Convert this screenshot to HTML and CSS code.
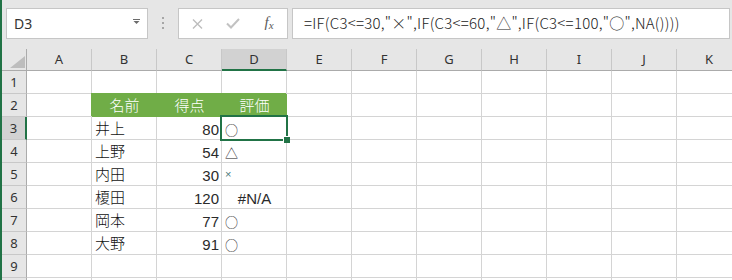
FILE: index.html
```html
<!DOCTYPE html>
<html lang="ja">
<head>
    <meta charset="UTF-8">
    <title>評価</title>
    <link rel="stylesheet" href="styles.css">
</head>
<body>
    <div class="window">
        <div class="toolbar">
            <div class="name-box">
                <span>D3</span>
                <svg class="drop" width="7" height="5" viewBox="0 0 7 5">
                    <path d="M0 0.5H7" stroke="#6b6b6b" stroke-width="1"/>
                    <path d="M0.5 2H6.5L3.5 5Z" fill="#6b6b6b"/>
                </svg>
            </div>
            <div class="grip"><i></i><i></i><i></i></div>
            <div class="fx-buttons">
                <span class="btn">
                    <svg width="11" height="10" viewBox="0 0 11 10">
                        <path d="M1 0.5L10 9.5M10 0.5L1 9.5" stroke="#bdbdbd" stroke-width="1.4" fill="none"/>
                    </svg>
                </span>
                <span class="btn">
                    <svg width="14" height="11" viewBox="0 0 14 11">
                        <path d="M1 5.5L5 9.5L13 1" stroke="#c2c2c2" stroke-width="2" fill="none"/>
                    </svg>
                </span>
                <span class="btn fx">f<small>x</small></span>
            </div>
            <div class="formula">=IF(C3&lt;=30,"×",IF(C3&lt;=60,"△",IF(C3&lt;=100,"○",NA())))</div>
        </div>

        <div class="sheet">
            <div class="corner"><i></i></div>
            <div class="col">A</div>
            <div class="col">B</div>
            <div class="col">C</div>
            <div class="col active">D</div>
            <div class="col">E</div>
            <div class="col">F</div>
            <div class="col">G</div>
            <div class="col">H</div>
            <div class="col">I</div>
            <div class="col">J</div>
            <div class="col">K</div>

            <div class="row">1</div>
            <div class="cell"></div><div class="cell"></div><div class="cell"></div><div class="cell"></div>
            <div class="cell"></div><div class="cell"></div><div class="cell"></div><div class="cell"></div>
            <div class="cell"></div><div class="cell"></div><div class="cell"></div>

            <div class="row">2</div>
            <div class="cell"></div>
            <div class="cell head">名前</div>
            <div class="cell head">得点</div>
            <div class="cell head">評価</div>
            <div class="cell"></div><div class="cell"></div><div class="cell"></div><div class="cell"></div>
            <div class="cell"></div><div class="cell"></div><div class="cell"></div>

            <div class="row active">3</div>
            <div class="cell"></div>
            <div class="cell">井上</div>
            <div class="cell num">80</div>
            <div class="cell mark selected">○<span class="sel-box"></span><span class="handle"></span></div>
            <div class="cell"></div><div class="cell"></div><div class="cell"></div><div class="cell"></div>
            <div class="cell"></div><div class="cell"></div><div class="cell"></div>

            <div class="row">4</div>
            <div class="cell"></div>
            <div class="cell">上野</div>
            <div class="cell num">54</div>
            <div class="cell mark">△</div>
            <div class="cell"></div><div class="cell"></div><div class="cell"></div><div class="cell"></div>
            <div class="cell"></div><div class="cell"></div><div class="cell"></div>

            <div class="row">5</div>
            <div class="cell"></div>
            <div class="cell">内田</div>
            <div class="cell num">30</div>
            <div class="cell"><span class="cross">×</span></div>
            <div class="cell"></div><div class="cell"></div><div class="cell"></div><div class="cell"></div>
            <div class="cell"></div><div class="cell"></div><div class="cell"></div>

            <div class="row">6</div>
            <div class="cell"></div>
            <div class="cell">榎田</div>
            <div class="cell num">120</div>
            <div class="cell num error">#N/A</div>
            <div class="cell"></div><div class="cell"></div><div class="cell"></div><div class="cell"></div>
            <div class="cell"></div><div class="cell"></div><div class="cell"></div>

            <div class="row">7</div>
            <div class="cell"></div>
            <div class="cell">岡本</div>
            <div class="cell num">77</div>
            <div class="cell mark">○</div>
            <div class="cell"></div><div class="cell"></div><div class="cell"></div><div class="cell"></div>
            <div class="cell"></div><div class="cell"></div><div class="cell"></div>

            <div class="row">8</div>
            <div class="cell"></div>
            <div class="cell">大野</div>
            <div class="cell num">91</div>
            <div class="cell mark">○</div>
            <div class="cell"></div><div class="cell"></div><div class="cell"></div><div class="cell"></div>
            <div class="cell"></div><div class="cell"></div><div class="cell"></div>

            <div class="row">9</div>
            <div class="cell"></div><div class="cell"></div><div class="cell"></div><div class="cell"></div>
            <div class="cell"></div><div class="cell"></div><div class="cell"></div><div class="cell"></div>
            <div class="cell"></div><div class="cell"></div><div class="cell"></div>

            <div class="row"></div>
            <div class="cell"></div><div class="cell"></div><div class="cell"></div><div class="cell"></div>
            <div class="cell"></div><div class="cell"></div><div class="cell"></div><div class="cell"></div>
            <div class="cell"></div><div class="cell"></div><div class="cell"></div>
        </div>
    </div>
</body>
</html>
```

FILE: styles.css
```css
html, body {
    margin: 0;
    height: 100%;
    overflow: hidden;
    background-color: #e6e6e6;
}
.window {
    border-left: 2px solid #217346;
    height: 100%;
    width: 760px;
    font-family: "Noto Sans CJK JP", sans-serif;
}
.toolbar {
    height: 49px;
    display: flex;
    align-items: flex-start;
    padding-top: 8px;
    box-sizing: border-box;
    background-color: #e6e6e6;
}
.name-box {
    margin-left: 4px;
    width: 142px;
    height: 31px;
    box-sizing: border-box;
    background-color: white;
    border: 1px solid #c6c6c6;
    display: flex;
    align-items: center;
    justify-content: space-between;
    padding: 0 7px 1px 7px;
    font-family: "Noto Sans", sans-serif;
    font-size: 14px;
    color: #333;
}
.name-box .drop {
    margin-bottom: 3px;
}
.grip {
    margin: 9px 14px 0 14px;
    display: flex;
    flex-direction: column;
    gap: 3px;
}
.grip i {
    display: block;
    width: 2px;
    height: 2px;
    background-color: #a6a6a6;
}
.fx-buttons {
    width: 110px;
    height: 31px;
    box-sizing: border-box;
    background-color: white;
    border: 1px solid #c6c6c6;
    display: flex;
}
.fx-buttons .btn {
    width: 36px;
    display: flex;
    align-items: center;
    justify-content: center;
}
.fx-buttons .fx {
    font-family: "Liberation Serif", serif;
    font-style: italic;
    font-size: 15px;
    color: #5a5a5a;
    padding-bottom: 2px;
}
.fx-buttons .fx small {
    font-size: 11px;
    margin-top: 4px;
}
.formula {
    margin-left: 4px;
    width: 438px;
    height: 31px;
    box-sizing: border-box;
    background-color: white;
    border: 1px solid #c6c6c6;
    padding-left: 11px;
    line-height: 27px;
    font-size: 15px;
    font-weight: 300;
    letter-spacing: 0.25px;
    color: #222;
    white-space: nowrap;
}

/* grid */
.sheet {
    display: grid;
    grid-template-columns: 25px repeat(11, 65px);
    grid-template-rows: 22px repeat(10, 23px);
    background-color: white;
}
.sheet > div {
    box-sizing: border-box;
}
.corner, .col, .row {
    background-color: #e6e6e6;
    font-family: "Noto Sans", sans-serif;
    font-size: 13px;
    color: #333;
}
.corner {
    border-right: 1px solid #ababab;
    border-bottom: 1px solid #ababab;
    display: flex;
    justify-content: flex-end;
    align-items: flex-end;
    padding: 0 1px 2px 0;
}
.corner i {
    width: 0;
    height: 0;
    border-left: 15px solid transparent;
    border-bottom: 12px solid #bdbdbd;
}
.col {
    border-right: 1px solid #c8c8c8;
    border-bottom: 1px solid #ababab;
    text-align: center;
    line-height: 21px;
}
.col.active {
    background-color: #d2d2d2;
    border-bottom: 2px solid #217346;
}
.row {
    border-right: 1px solid #ababab;
    border-bottom: 1px solid #c8c8c8;
    text-align: center;
    line-height: 22px;
}
.row.active {
    background-color: #d2d2d2;
    border-right: 2px solid #217346;
}
.cell {
    border-right: 1px solid #d4d4d4;
    border-bottom: 1px solid #d4d4d4;
    padding: 0 2px 0 3px;
    font-size: 15px;
    font-weight: 300;
    line-height: 22px;
    color: #111;
    white-space: nowrap;
}
.cell.head {
    background-color: #70ad47;
    border-color: #70ad47;
    box-shadow: -1px -1px 0 0 #70ad47;
    color: white;
    text-align: center;
}
.cell.num {
    font-family: "Liberation Sans Narrow", "Arial Narrow", "Liberation Sans", sans-serif;
    font-weight: normal;
    color: #2a2a2a;
    text-align: right;
    line-height: 21px;
    padding-top: 2px;
}
.cell.error {
    text-align: center;
}
.cell.mark {
    font-size: 13px;
    line-height: 21px;
    padding-top: 2px;
}
.cross {
    font-family: "Liberation Sans", sans-serif;
    font-size: 11px;
    color: #4a7a7a;
    vertical-align: 3px;
}
.selected {
    position: relative;
}
.sel-box {
    position: absolute;
    left: -2px;
    top: -2px;
    width: 68px;
    height: 26px;
    box-sizing: border-box;
    border: 2px solid #217346;
}
.handle {
    position: absolute;
    left: 61px;
    top: 19px;
    width: 7px;
    height: 7px;
    box-sizing: border-box;
    background-color: #217346;
    border-left: 1px solid white;
    border-top: 1px solid white;
}
```
